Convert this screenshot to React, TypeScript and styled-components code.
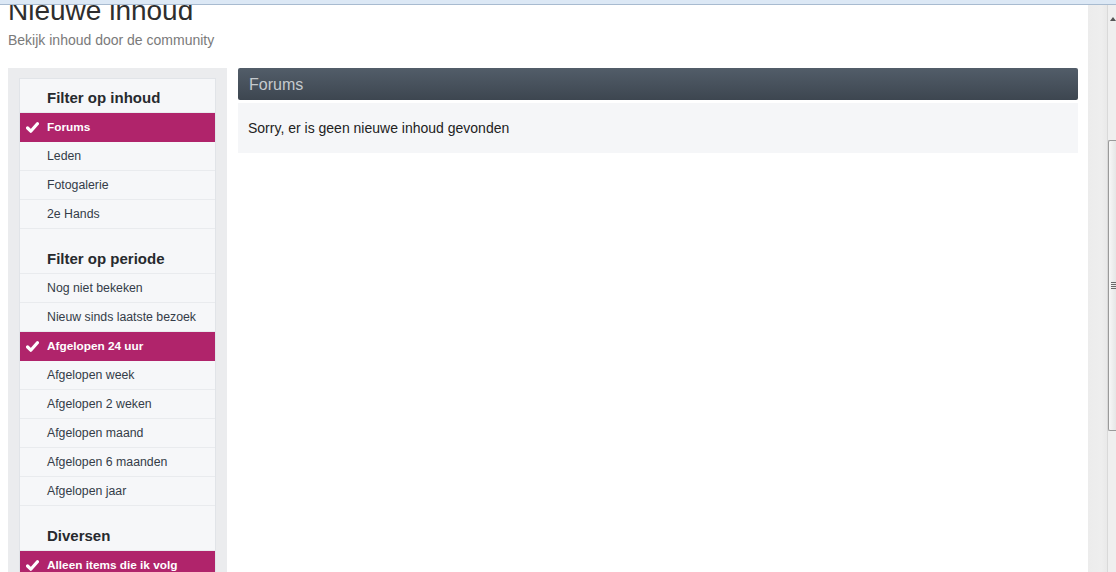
import React from "react";
import styled, { createGlobalStyle } from "styled-components";

const Global = createGlobalStyle`
  html, body {
    margin: 0;
    padding: 0;
    background: #ffffff;
    font-family: "Liberation Sans", Arial, sans-serif;
  }
`;

const Frame = styled.div`
  display: flex;
  flex-direction: column;
  height: 100vh;
  overflow: hidden;
`;

const ChromeStrip = styled.div`
  height: 4px;
  flex: none;
  background: #dce8f5;
  border-bottom: 1px solid #a8bbd0;
`;

const Viewport = styled.div`
  display: flex;
  flex: 1;
  min-height: 0;
`;

const Page = styled.div`
  width: 1088px;
  flex: none;
  display: flex;
  flex-direction: column;
  padding: 0 10px 0 8px;
  box-sizing: border-box;
  overflow: hidden;
  background: #ffffff;
`;

const Title = styled.h1`
  margin: -8px 0 0;
  font-size: 28px;
  line-height: 28px;
  font-weight: normal;
  color: #2e2e2e;
`;

const Subtitle = styled.p`
  margin: 5px 0 0;
  font-size: 14px;
  line-height: 20px;
  color: #7a7a7a;
`;

const Columns = styled.div`
  display: flex;
  gap: 11px;
  margin-top: 18px;
  flex: 1;
  min-height: 0;
`;

const SidebarWell = styled.aside`
  width: 219px;
  flex: none;
  box-sizing: border-box;
  padding: 10px 11px 0;
  background: #ebecee;
`;

const FilterPanel = styled.div`
  background: #f6f7f9;
  border: 1px solid #e1e4e8;
  border-bottom: none;
`;

const Section = styled.div`
  & + & {
    margin-top: 11px;
  }
`;

const SectionTitle = styled.div`
  padding: 9px 0 5px 27px;
  font-size: 15px;
  line-height: 19px;
  font-weight: bold;
  color: #272a2e;
  border-bottom: 1px solid #e9ebee;
`;

const Row = styled.div<{ $active?: boolean }>`
  display: flex;
  align-items: center;
  height: 28px;
  padding-left: 6px;
  border-bottom: 1px solid ${(p) => (p.$active ? "#b0246b" : "#e9ebee")};
  background: ${(p) => (p.$active ? "#b0246b" : "transparent")};
  color: ${(p) => (p.$active ? "#ffffff" : "#343c48")};
  font-size: ${(p) => (p.$active ? "11.8px" : "12.3px")};
  font-weight: ${(p) => (p.$active ? "bold" : "normal")};
  white-space: nowrap;
`;

const IconSlot = styled.span`
  width: 21px;
  flex: none;
  display: flex;
  align-items: center;
`;

const Main = styled.main`
  flex: 1;
  min-width: 0;
`;

const BarHeader = styled.div`
  height: 32px;
  box-sizing: border-box;
  padding: 1px 0 0 11px;
  display: flex;
  align-items: center;
  border-radius: 2px;
  background: linear-gradient(#525d69, #3d4650);
  color: #c5cace;
  font-size: 16px;
`;

const Notice = styled.div`
  margin-top: 3px;
  height: 50px;
  box-sizing: border-box;
  padding: 0 10px;
  display: flex;
  align-items: center;
  background: #f5f6f8;
  color: #222222;
  font-size: 14px;
`;

const Gutter = styled.div`
  width: 19px;
  flex: none;
  background: linear-gradient(90deg, #ececec, #eeeeee 70%, #e9e9e9);
`;

const Scrollbar = styled.div`
  flex: 1;
  display: flex;
  flex-direction: column;
  background: #efefef;
  border-left: 1px solid #d9d9d9;
`;

const ArrowUp = styled.div`
  height: 130px;
  flex: none;
  display: flex;
  justify-content: flex-end;
  padding-top: 12px;
  box-sizing: border-box;
  &::before {
    content: "";
    width: 0;
    height: 0;
    border-left: 3px solid transparent;
    border-right: 3px solid transparent;
    border-bottom: 4px solid #555;
  }
`;

const Thumb = styled.div`
  height: 291px;
  flex: none;
  margin-top: 5px;
  box-sizing: border-box;
  border: 1px solid #9a9a9a;
  border-right: none;
  border-radius: 2px 0 0 2px;
  background: linear-gradient(90deg, #f7f7f7, #e6e6e6);
  display: flex;
  align-items: center;
  justify-content: flex-end;
`;

const Grip = styled.div`
  width: 5px;
  height: 7px;
  background: repeating-linear-gradient(#6a6a6a 0 1px, transparent 1px 2px);
`;

const Check = () => (
  <svg width="13" height="11" viewBox="0 0 13 11">
    <path
      d="M1.6 6 L4.8 9.2 L11.4 1.8"
      fill="none"
      stroke="#ffffff"
      strokeWidth="3.2"
      strokeLinecap="round"
      strokeLinejoin="round"
    />
  </svg>
);

type Item = { label: string; active?: boolean };

const sections: { title: string; items: Item[] }[] = [
  {
    title: "Filter op inhoud",
    items: [
      { label: "Forums", active: true },
      { label: "Leden" },
      { label: "Fotogalerie" },
      { label: "2e Hands" },
    ],
  },
  {
    title: "Filter op periode",
    items: [
      { label: "Nog niet bekeken" },
      { label: "Nieuw sinds laatste bezoek" },
      { label: "Afgelopen 24 uur", active: true },
      { label: "Afgelopen week" },
      { label: "Afgelopen 2 weken" },
      { label: "Afgelopen maand" },
      { label: "Afgelopen 6 maanden" },
      { label: "Afgelopen jaar" },
    ],
  },
  {
    title: "Diversen",
    items: [{ label: "Alleen items die ik volg", active: true }],
  },
];

export default function App() {
  return (
    <Frame>
      <Global />
      <ChromeStrip />
      <Viewport>
        <Page>
          <Title>Nieuwe inhoud</Title>
          <Subtitle>Bekijk inhoud door de community</Subtitle>
          <Columns>
            <SidebarWell>
              <FilterPanel>
                {sections.map((s) => (
                  <Section key={s.title}>
                    <SectionTitle>{s.title}</SectionTitle>
                    {s.items.map((it) => (
                      <Row key={it.label} $active={it.active}>
                        <IconSlot>{it.active && <Check />}</IconSlot>
                        {it.label}
                      </Row>
                    ))}
                  </Section>
                ))}
              </FilterPanel>
            </SidebarWell>
            <Main>
              <BarHeader>Forums</BarHeader>
              <Notice>Sorry, er is geen nieuwe inhoud gevonden</Notice>
            </Main>
          </Columns>
        </Page>
        <Gutter />
        <Scrollbar>
          <ArrowUp />
          <Thumb>
            <Grip />
          </Thumb>
        </Scrollbar>
      </Viewport>
    </Frame>
  );
}
